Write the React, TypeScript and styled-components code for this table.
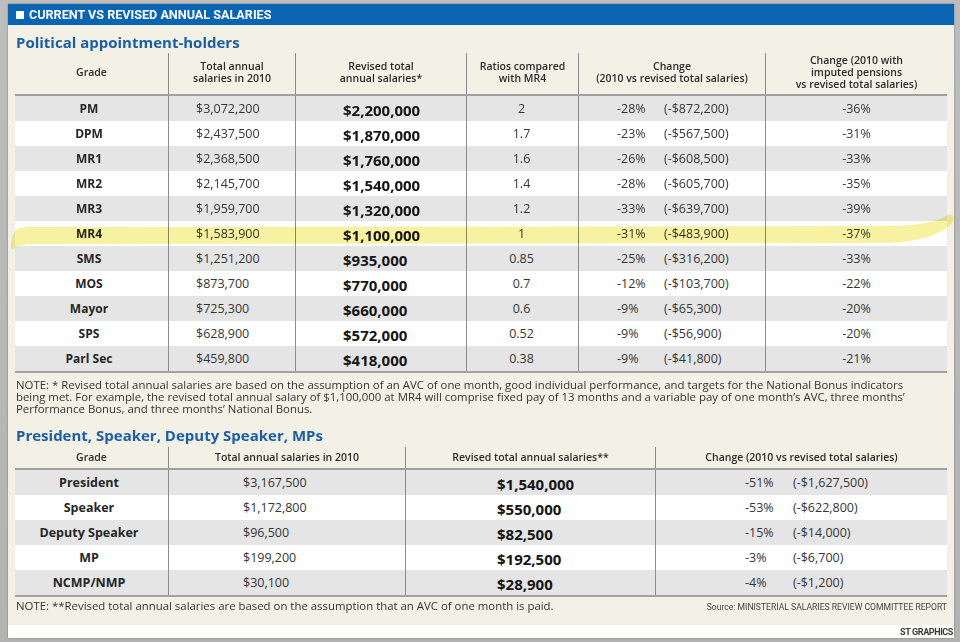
import React from "react";
import styled, { createGlobalStyle } from "styled-components";

const Global = createGlobalStyle`
  html, body { margin: 0; padding: 0; }
  body {
    background: #b7b7b7;
    font-family: "Open Sans", "Noto Sans", sans-serif;
    color: #2a2a2a;
  }
  * { box-sizing: border-box; }
`;

const Page = styled.div`
  width: 960px;
  height: 642px;
  padding: 4px 0 0 8px;
  background: linear-gradient(#bdbdbd, #b3b3b3);
  overflow: hidden;
`;

const Panel = styled.div`
  width: 946px;
  height: 634px;
  background: #f3f0e5;
  display: flex;
  flex-direction: column;
  box-shadow: 0 0 2px rgba(0, 0, 0, 0.35);
`;

const HeaderBar = styled.div`
  height: 21px;
  background: #0a64b4;
  display: flex;
  align-items: center;
  padding-left: 8px;
`;

const Square = styled.span`
  width: 8px;
  height: 8px;
  background: #fff;
  margin-right: 5px;
`;

const HeaderText = styled.span`
  color: #fff;
  font-family: Roboto, "Open Sans", sans-serif;
  font-weight: 700;
  font-size: 12.6px;
  letter-spacing: 0;
`;

const Body = styled.div`
  flex: 1;
  padding: 0 7px;
  display: flex;
  flex-direction: column;
`;

const SectionTitle = styled.h2<{ $top: number }>`
  margin: ${(p) => p.$top}px 0 0 1px;
  font-size: 15px;
  line-height: 18px;
  font-weight: 700;
  color: #1b5ea8;
`;

const Table = styled.div<{ $top: number }>`
  margin-top: ${(p) => p.$top}px;
  border-bottom: 2px solid #a3a3a3;
`;

const HeadRow = styled.div<{ $cols: string; $h: number }>`
  display: grid;
  grid-template-columns: ${(p) => p.$cols};
  height: ${(p) => p.$h + 2}px;
  border-bottom: 2px solid #a0a0a0;
`;

const HeadCell = styled.div<{ $sep?: boolean; $lift: number }>`
  display: flex;
  align-items: center;
  justify-content: center;
  text-align: center;
  font-size: 10.5px;
  line-height: 12px;
  font-weight: 600;
  color: #2b2b2b;
  padding-bottom: ${(p) => p.$lift}px;
  border-left: ${(p) => (p.$sep ? "1px solid #8c8c8c" : "none")};
`;

const Row = styled.div<{ $cols: string; $shade: boolean }>`
  position: relative;
  display: grid;
  grid-template-columns: ${(p) => p.$cols};
  height: 25px;
  background: ${(p) => (p.$shade ? "#e5e5e6" : "#ffffff")};
`;

const Cell = styled.div<{ $sep?: boolean; $align?: "center" | "left"; $pad?: number; $nudge?: number }>`
  display: flex;
  align-items: center;
  justify-content: ${(p) => (p.$align === "left" ? "flex-start" : "center")};
  padding-left: ${(p) => p.$pad ?? 0}px;
  padding-right: ${(p) => p.$nudge ?? 0}px;
  border-left: ${(p) => (p.$sep ? "1px solid #8c8c8c" : "none")};
  white-space: nowrap;
`;

const Grade = styled.span<{ $size: number }>`
  font-size: ${(p) => p.$size}px;
  font-weight: 700;
  color: #262626;
`;

const Num = styled.span`
  font-size: 12.5px;
  color: #353535;
`;

const BigNum = styled.span`
  font-size: 15px;
  font-weight: 700;
  color: #151515;
  padding-top: 2px;
`;

const Pct = styled.span<{ $w: number }>`
  display: inline-block;
  width: ${(p) => p.$w}px;
  font-size: 12.5px;
  color: #353535;
`;

const Note = styled.p<{ $top: number }>`
  margin: ${(p) => p.$top}px 0 0 1px;
  font-size: 11.4px;
  line-height: 12px;
  color: #333;
  white-space: nowrap;
`;

const NoteLine = styled.div`
  margin-top: 3px;
  display: flex;
  justify-content: space-between;
  align-items: baseline;
`;

const NoteText = styled.span`
  font-size: 11.4px;
  line-height: 12px;
  color: #333;
  padding-left: 1px;
`;

const Source = styled.span`
  font-family: Roboto, "Open Sans", sans-serif;
  font-size: 8.6px;
  letter-spacing: 0;
  color: #444;
`;

const Footer = styled.div`
  height: 13px;
  background: #fdfdfc;
  display: flex;
  align-items: center;
  justify-content: flex-end;
  padding-right: 1px;
`;

const Credit = styled.span`
  font-family: Roboto, sans-serif;
  font-weight: 700;
  font-size: 9px;
  letter-spacing: -0.4px;
  color: #3a3a3a;
`;

const Highlighter = styled.svg`
  position: absolute;
  left: -7px;
  top: -16px;
  width: 950px;
  height: 50px;
  pointer-events: none;
  mix-blend-mode: multiply;
`;

const COLS1 = "153px 127px 171px 112px 187px 182px";
const COLS2 = "153px 237px 250px 292px";

const rows1 = [
  ["PM", "$3,072,200", "$2,200,000", "2", "-28%", "(-$872,200)", "-36%"],
  ["DPM", "$2,437,500", "$1,870,000", "1.7", "-23%", "(-$567,500)", "-31%"],
  ["MR1", "$2,368,500", "$1,760,000", "1.6", "-26%", "(-$608,500)", "-33%"],
  ["MR2", "$2,145,700", "$1,540,000", "1.4", "-28%", "(-$605,700)", "-35%"],
  ["MR3", "$1,959,700", "$1,320,000", "1.2", "-33%", "(-$639,700)", "-39%"],
  ["MR4", "$1,583,900", "$1,100,000", "1", "-31%", "(-$483,900)", "-37%"],
  ["SMS", "$1,251,200", "$935,000", "0.85", "-25%", "(-$316,200)", "-33%"],
  ["MOS", "$873,700", "$770,000", "0.7", "-12%", "(-$103,700)", "-22%"],
  ["Mayor", "$725,300", "$660,000", "0.6", "-9%", "(-$65,300)", "-20%"],
  ["SPS", "$628,900", "$572,000", "0.52", "-9%", "(-$56,900)", "-20%"],
  ["Parl Sec", "$459,800", "$418,000", "0.38", "-9%", "(-$41,800)", "-21%"],
];

const rows2 = [
  ["President", "$3,167,500", "$1,540,000", "-51%", "(-$1,627,500)"],
  ["Speaker", "$1,172,800", "$550,000", "-53%", "(-$622,800)"],
  ["Deputy Speaker", "$96,500", "$82,500", "-15%", "(-$14,000)"],
  ["MP", "$199,200", "$192,500", "-3%", "(-$6,700)"],
  ["NCMP/NMP", "$30,100", "$28,900", "-4%", "(-$1,200)"],
];

const HighlightStroke = () => (
  <Highlighter viewBox="0 0 950 50" preserveAspectRatio="none">
    <path
      d="M6 28 C8 24 12 22 22 22 L872 21 C907 21 927 18 940 10 C945 8 947 12 944 18 C932 31 907 38 872 38 L22 39 C14 39 8 43 4 45 C2 43 3 33 6 28 Z"
      fill="#f6f19c"
      opacity="0.95"
    />
  </Highlighter>
);

export default function App() {
  return (
    <>
      <Global />
      <Page>
        <Panel>
          <HeaderBar>
            <Square />
            <HeaderText>CURRENT VS REVISED ANNUAL SALARIES</HeaderText>
          </HeaderBar>
          <Body>
            <SectionTitle $top={8}>Political appointment-holders</SectionTitle>
            <Table $top={2}>
              <HeadRow $cols={COLS1} $h={41}>
                <HeadCell $lift={4}>Grade</HeadCell>
                <HeadCell $lift={4} $sep>
                  Total annual
                  <br />
                  salaries in 2010
                </HeadCell>
                <HeadCell $lift={4} $sep>
                  Revised total
                  <br />
                  annual salaries*
                </HeadCell>
                <HeadCell $lift={4} $sep>
                  Ratios compared
                  <br />
                  with MR4
                </HeadCell>
                <HeadCell $lift={4} $sep>
                  Change
                  <br />
                  (2010 vs revised total salaries)
                </HeadCell>
                <HeadCell $lift={4} $sep>
                  Change (2010 with
                  <br />
                  imputed pensions
                  <br />
                  vs revised total salaries)
                </HeadCell>
              </HeadRow>
              {rows1.map((r, i) => (
                <Row key={r[0]} $cols={COLS1} $shade={i % 2 === 0 && r[0] !== "MR4"}>
                  {r[0] === "MR4" && <HighlightStroke />}
                  <Cell $nudge={5}>
                    <Grade $size={12}>{r[0]}</Grade>
                  </Cell>
                  <Cell $sep $align="left" $pad={27}>
                    <Num>{r[1]}</Num>
                  </Cell>
                  <Cell $sep $align="left" $pad={47}>
                    <BigNum>{r[2]}</BigNum>
                  </Cell>
                  <Cell $sep $nudge={2}>
                    <Num>{r[3]}</Num>
                  </Cell>
                  <Cell $sep $align="left" $pad={38}>
                    <Pct $w={47}>{r[4]}</Pct>
                    <Num>{r[5]}</Num>
                  </Cell>
                  <Cell $sep>
                    <Num>{r[6]}</Num>
                  </Cell>
                </Row>
              ))}
            </Table>
            <Note $top={6}>
              NOTE: * Revised total annual salaries are based on the assumption of an AVC of one month, good individual
              performance, and targets for the National Bonus indicators
              <br />
              being met. For example, the revised total annual salary of $1,100,000 at MR4 will comprise fixed pay of 13
              months and a variable pay of one month’s AVC, three months’
              <br />
              Performance Bonus, and three months’ National Bonus.
            </Note>
            <SectionTitle $top={11}>President, Speaker, Deputy Speaker, MPs</SectionTitle>
            <Table $top={3}>
              <HeadRow $cols={COLS2} $h={21}>
                <HeadCell $lift={2}>Grade</HeadCell>
                <HeadCell $lift={2} $sep>Total annual salaries in 2010</HeadCell>
                <HeadCell $lift={2} $sep>Revised total annual salaries**</HeadCell>
                <HeadCell $lift={2} $sep>Change (2010 vs revised total salaries)</HeadCell>
              </HeadRow>
              {rows2.map((r, i) => (
                <Row key={r[0]} $cols={COLS2} $shade={i % 2 === 0}>
                  <Cell $nudge={5}>
                    <Grade $size={12.5}>{r[0]}</Grade>
                  </Cell>
                  <Cell $sep $align="left" $pad={74}>
                    <Num>{r[1]}</Num>
                  </Cell>
                  <Cell $sep $align="left" $pad={91}>
                    <BigNum>{r[2]}</BigNum>
                  </Cell>
                  <Cell $sep $align="left" $pad={89}>
                    <Pct $w={48}>{r[3]}</Pct>
                    <Num>{r[4]}</Num>
                  </Cell>
                </Row>
              ))}
            </Table>
            <NoteLine>
              <NoteText>
                NOTE: **Revised total annual salaries are based on the assumption that an AVC of one month is paid.
              </NoteText>
              <Source>Source: MINISTERIAL SALARIES REVIEW COMMITTEE REPORT</Source>
            </NoteLine>
          </Body>
          <Footer>
            <Credit>ST GRAPHICS</Credit>
          </Footer>
        </Panel>
      </Page>
    </>
  );
}
